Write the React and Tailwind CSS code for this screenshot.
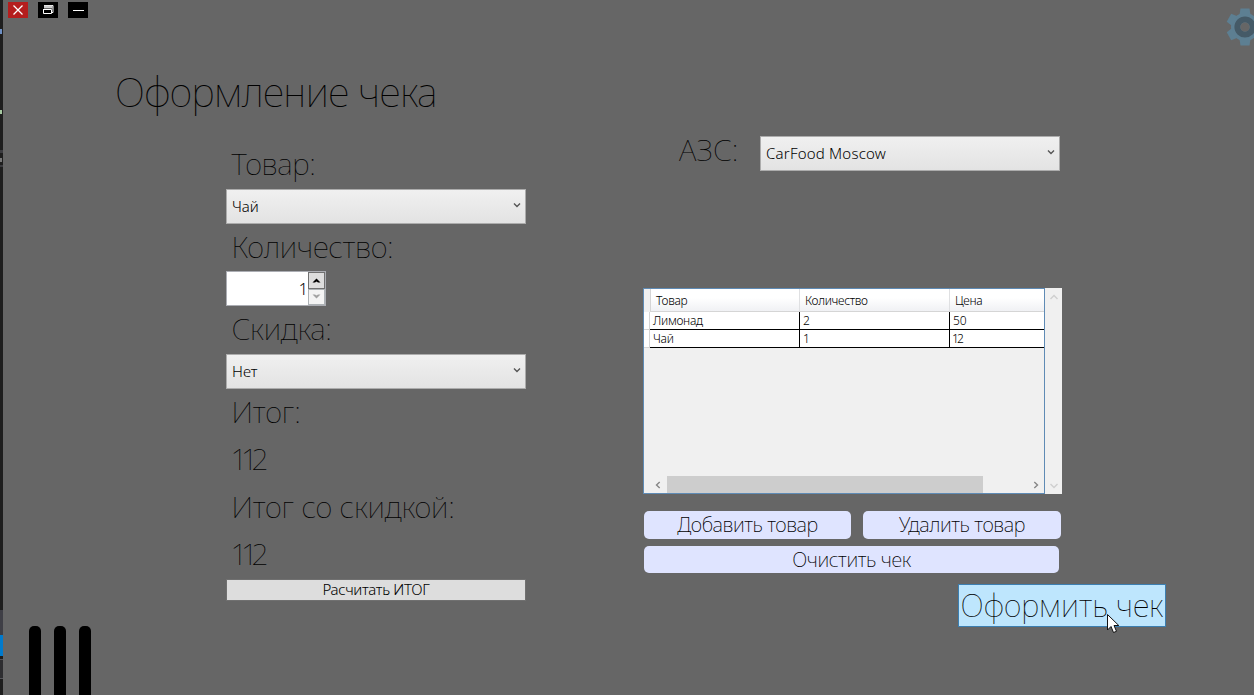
import React from "react";

function Chevron({ className = "", d = "M1 1.5 L4 4.5 L7 1.5", stroke = "#555", w = 8, h = 6, sw = 1.4 }) {
  return (
    <svg className={className} width={w} height={h} viewBox={`0 0 ${w} ${h}`} fill="none" stroke={stroke} strokeWidth={sw}>
      <path d={d} />
    </svg>
  );
}

function Combo({ children, textClass = "" }) {
  return (
    <div className="flex h-[35px] w-[300px] items-center justify-between border border-[#acacac] bg-linear-to-b from-[#f0f0f0] to-[#e3e3e3] pr-1 pl-[5px] text-[15px] leading-[33px] font-[260]">
      <span className={textClass}>{children}</span>
      <Chevron className="-mt-[3px]" />
    </div>
  );
}

function Label({ children, className = "" }) {
  return <div className={`pl-[5.5px] text-[30px] leading-[45px] font-[150] ${className}`}>{children}</div>;
}

function Stepper() {
  return (
    <div className="flex h-[35px] w-[100px] border border-[#abadb3] bg-white">
      <div className="flex-1 text-right text-[16px] leading-[35px] font-[260]">1</div>
      <div className="flex w-[17px] flex-col">
        <div className="flex h-[17px] items-center justify-center border border-[#707070] bg-[#dddddd]">
          <svg width="9" height="5" viewBox="0 0 9 5"><path d="M0.5 4.5 L4.5 0.5 L8.5 4.5 H6 L4.5 3.5 L3 4.5Z" fill="#000" /></svg>
        </div>
        <div className="flex h-[16px] items-center justify-center border border-[#adb2b5] bg-[#f4f4f4] pb-0.5">
          <svg width="9" height="5" viewBox="0 0 9 5"><path d="M0.5 0.5 H3 L4.5 1.5 L6 0.5 H8.5 L4.5 4.5Z" fill="#a3a3a3" /></svg>
        </div>
      </div>
    </div>
  );
}

const rows = [
  ["Лимонад", "2", "50"],
  ["Чай", "1", "12"],
];

function Grid() {
  return (
    <div className="-ml-px flex h-[206px] w-[419px] bg-[#f0f0f0]">
      <div className="flex w-[402px] flex-col border border-[#5f8bb5] text-[12px] font-[260] tracking-[-0.3px]">
        <div className="flex h-[23px] pl-[6px]">
          <div className="flex flex-1 border-b border-l border-[#d5d5d5] bg-linear-to-b from-white from-40% to-[#f0f1f4] leading-[23px]">
            <div className="w-[149px] border-r border-[#dfe0e2] pl-[5px]">Товар</div>
            <div className="w-[150px] border-r border-[#dfe0e2] pl-[5px]">Количество</div>
            <div className="pl-[5px]">Цена</div>
          </div>
        </div>
        {rows.map((r) => (
          <div key={r[0]} className="flex h-[18px] leading-[17px]">
            <div className="w-[6px] border-r border-b border-[#d5d5d5] bg-white" />
            <div className="w-[150px] border-r border-b border-black bg-white pl-[3px]">{r[0]}</div>
            <div className="w-[150px] border-r border-b border-black bg-white pl-[3px]">{r[1]}</div>
            <div className={r[2] === "12" ? "flex-1 border-b border-black bg-white pl-[2px] tracking-[-1.8px]" : "flex-1 border-b border-black bg-white pl-[3px] tracking-normal"}>{r[2]}</div>
          </div>
        ))}
        <div className="flex-1" />
        <div className="flex h-[17px] items-center">
          <Chevron className="mr-[6px] ml-[11px]" w={6} h={8} d="M4.7 1 L1.5 4 L4.7 7" stroke="#868686" />
          <div className="h-[17px] w-[316px] bg-[#cdcdcd]" />
          <Chevron className="ml-[50px]" w={6} h={8} d="M1.3 1 L4.5 4 L1.3 7" stroke="#868686" />
        </div>
      </div>
      <div className="flex flex-1 flex-col items-center justify-between pt-1.5 pb-[5px]">
        <Chevron d="M0.5 5 L4 1.5 L7.5 5" stroke="#cfcfcf" />
        <Chevron d="M0.5 1 L4 4.5 L7.5 1" stroke="#cfcfcf" />
      </div>
    </div>
  );
}

function FlatButton({ children, className = "" }) {
  return <button className={`rounded-[5px] bg-[#dfe4ff] text-center text-[20px] font-extralight tracking-[-0.4px] ${className}`}>{children}</button>;
}

function Gear() {
  return (
    <svg className="absolute top-[8px] left-[1223px]" width="38" height="38" viewBox="-19 -19 38 38">
      <g fill="#5d7f92">
        <circle r="14" />
        {[0, 60, 120, 180, 240, 300].map((a) => (
          <path key={a} d="M-5.5 -12 L-4.5 -18.5 H4.5 L5.5 -12Z" transform={`rotate(${a})`} />
        ))}
      </g>
      <circle r="7.6" fill="none" stroke="#455a67" strokeWidth="6" />
      <circle r="4.6" fill="#666" />
    </svg>
  );
}

export default function App() {
  return (
    <div className="flex h-[695px] w-[1254px] overflow-hidden bg-[#666666] font-['Noto_Sans',sans-serif] font-extralight whitespace-nowrap text-black">
      <div className="flex w-[3px] shrink-0 flex-col bg-[#1e1e1e]">
        <div className="mt-[29px] h-[5px] w-[2px] bg-[#6d8fc4]" />
        <div className="mt-[76px] h-[4px] w-[2px] bg-[#a5c8a0]" />
        <div className="mt-[36px] h-[3px] bg-[#3c3c40]" />
        <div className="mt-[5px] h-[4px] w-[2px] bg-[#777777]" />
        <div className="mt-[3px] h-[2px] bg-[#3c3c40]" />
        <div className="mt-[443px] h-[25px] bg-[#3f3f46]" />
        <div className="h-[21px] bg-[#007acc]" />
        <div className="mt-[3px] h-px bg-[#55555a]" />
        <div className="h-[18px] bg-[#2d2d30]" />
        <div className="h-px bg-[#55555a]" />
      </div>
      <div className="relative flex-1 overflow-hidden">
        <div className="flex h-[20px] gap-[10px] pt-[2px] pl-[5px]">
          <div className="flex h-4 w-5 items-center justify-center bg-[#b51d1d]">
            <svg width="12" height="12" viewBox="0 0 12 12" stroke="#fff" strokeWidth="1.3"><path d="M1.5 1.5 L10.5 10.5 M10.5 1.5 L1.5 10.5" /></svg>
          </div>
          <div className="flex h-4 w-5 items-center justify-center bg-black">
            <svg width="12" height="10" viewBox="0 0 12 10" fill="none" stroke="#fff">
              <path d="M2 0.5 H11 V7.5 H9.5" /><path d="M2 2 H10.5" stroke="#ccc" strokeWidth="3" /><path d="M1.5 4 V8.5 H9.5 V4.5 H1" />
            </svg>
          </div>
          <div className="flex h-4 w-5 items-center justify-center bg-black">
            <div className="h-px w-[11px] bg-white" />
          </div>
        </div>
        <Gear />
        <h1 className="mt-[45px] h-[59px] pl-[112px] text-[40px] leading-[54px] font-[150] tracking-[-0.6px]">Оформление чека</h1>
        <div className="flex">
          <section className="ml-[223px] flex w-[300px] flex-col pt-[17px]">
            <Label className="h-[48px] tracking-[-0.3px]">Товар:</Label>
            <Combo>Чай</Combo>
            <Label className="h-[47px] tracking-[-0.3px]">Количество:</Label>
            <Stepper />
            <Label className="h-[48px] tracking-[-0.3px]">Скидка:</Label>
            <Combo>Нет</Combo>
            <Label className="h-[47px] tracking-[-0.1px]">Итог:</Label>
            <Label className="-ml-px h-[48px] tracking-[-6.6px]">112</Label>
            <Label className="h-[47px] tracking-[-0.2px]">Итог со скидкой:</Label>
            <Label className="-ml-px h-[48px] tracking-[-6.6px]">112</Label>
            <button className="flex h-[22px] items-start justify-center border border-[#707070] bg-[#dddddd] text-[15px] leading-[18px] font-[260] tracking-[-0.35px]">Расчитать ИТОГ</button>
          </section>
          <section className="ml-[118px] flex flex-col pt-[12px]">
            <div className="flex h-[152px]">
              <div className="w-[116px] pl-[35px] text-[30px] leading-[28px] font-[150]">АЗС:</div>
              <Combo textClass="tracking-[0.2px]">CarFood Moscow</Combo>
            </div>
            <Grid />
            <div className="mt-[17px] flex gap-[12px]">
              <FlatButton className="h-[28px] w-[207px] leading-[28px]">Добавить товар</FlatButton>
              <FlatButton className="h-[28px] w-[198px] leading-[28px]">Удалить товар</FlatButton>
            </div>
            <FlatButton className="mt-[7px] h-[27px] w-[415px] leading-[28px]">Очистить чек</FlatButton>
            <button className="mt-[11px] ml-[314px] flex h-[43px] w-[208px] items-start justify-center border border-[#3c7fb1] bg-[#bee6fd] text-[31px] leading-[41px] font-[150]">Оформить чек</button>
          </section>
        </div>
        <svg className="absolute top-[614px] left-[1104px]" width="13" height="20" viewBox="0 0 13 20">
          <path d="M0.5 0.5 V16 L4 12.5 L6.5 18.5 L9.5 17.3 L7 11.5 H11.8Z" fill="#fff" stroke="#111" />
        </svg>
        <div className="absolute top-[626px] left-[26px] flex gap-[13px]">
          <div className="h-[80px] w-[12px] rounded-t-[5px] bg-black" />
          <div className="h-[80px] w-[12px] rounded-t-[5px] bg-black" />
          <div className="h-[80px] w-[12px] rounded-t-[5px] bg-black" />
        </div>
      </div>
    </div>
  );
}
